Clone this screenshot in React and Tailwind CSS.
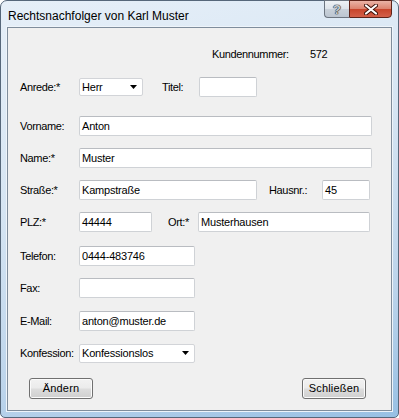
import React from 'react'

const font = "font-['Liberation_Sans',Arial,sans-serif]"

function Field({ value = '', w }) {
  return (
    <div className={`${w} h-[20px] shrink-0 bg-white border border-[#cfd2d6] border-t-[#b9bcc1] rounded-[2px] flex items-center pl-[2px] text-[11px] tracking-[-0.2px] text-black`}>
      {value}
    </div>
  )
}

function Combo({ value, w, h = 'h-[18px]' }) {
  return (
    <div className={`${w} ${h} shrink-0 bg-white border border-[#d2d4d8] rounded-[2px] flex items-center justify-between pl-[2px] pr-[5px] text-[11px] tracking-[-0.2px]`}>
      <span>{value}</span>
      <svg width="7" height="4" viewBox="0 0 7 4"><polygon points="0,0 7,0 3.5,4" fill="#000" /></svg>
    </div>
  )
}

function Label({ children, w = 'w-[59px]' }) {
  return <span className={`${w} shrink-0 whitespace-nowrap text-[11px] tracking-[-0.35px] text-black`}>{children}</span>
}

function Btn({ children }) {
  return (
    <button className="w-[64px] h-[21px] rounded-[3px] border border-[#707070] bg-[linear-gradient(#f2f2f2_0%,#ebebeb_48%,#dddddd_52%,#cfcfcf_100%)] text-[11px] tracking-[0.2px] text-black flex items-center justify-center shadow-[inset_0_0_0_1px_#fbfbfb]">
      {children}
    </button>
  )
}

export default function App() {
  return (
    <div className={`w-[399px] h-[418px] flex flex-col rounded-t-[7px] rounded-b-[5px] border border-[#56677a] bg-[linear-gradient(165deg,#e6eff8_0%,#d6e5f3_40%,#bcd4eb_75%,#98c0e4_100%)] ${font}`}>
      {/* Title bar */}
      <div className="h-[26px] flex items-start justify-between">
        <span className="pl-[7px] pt-[6px] text-[12px] text-black">Rechtsnachfolger von Karl Muster</span>
        <div className="flex mr-[6px] -mt-px">
          <div className="w-[25px] h-[18px] rounded-bl-[4px] border border-[#6c7580] border-r-0 bg-[linear-gradient(#eef2f6_0%,#dde3ea_50%,#c9d1da_51%,#bcc6d1_100%)] flex items-center justify-center">
            <span className="text-[13px] font-bold text-[#c9ced4] leading-none [text-shadow:0_0_1px_#1f2630,0_0_1px_#1f2630,0_0_1px_#1f2630]">?</span>
          </div>
          <div className="w-[43px] h-[18px] rounded-br-[4px] border border-[#5e2319] bg-[linear-gradient(#eab3a6_0%,#dc8470_48%,#c8452c_52%,#d3604a_100%)] flex items-center justify-center">
            <svg width="14" height="11" viewBox="0 0 14 11">
              <path d="M2 1.5 L12 9.5 M12 1.5 L2 9.5" stroke="#3b1008" strokeWidth="4" strokeLinecap="round" />
              <path d="M2 1.5 L12 9.5 M12 1.5 L2 9.5" stroke="#ffffff" strokeWidth="2.2" strokeLinecap="round" />
            </svg>
          </div>
        </div>
      </div>

      {/* Client area */}
      <div className="ml-[6px] w-[385px] h-[384px] border border-[#7f8d9c] bg-[#f0f0f0] flex flex-col shadow-[0_0_0_1px_#eef4fa]">
        <div className="mt-[16px] h-[20px] flex items-center pl-[204px] text-[11px] tracking-[-0.35px]">
          <span className="w-[98px]">Kundennummer:</span>
          <span>572</span>
        </div>

        <div className="mt-[13px] h-[20px] flex items-center pl-[12px]">
          <Label>Anrede:*</Label>
          <Combo value="Herr" w="w-[64px]" />
          <span className="ml-[19px] w-[37px] text-[11px] tracking-[-0.35px]">Titel:</span>
          <Field w="w-[58px]" />
        </div>

        <div className="mt-[19px] h-[20px] flex items-center pl-[12px]">
          <Label>Vorname:</Label>
          <Field value="Anton" w="w-[293px]" />
        </div>

        <div className="mt-[12px] h-[20px] flex items-center pl-[12px]">
          <Label>Name:*</Label>
          <Field value="Muster" w="w-[293px]" />
        </div>

        <div className="mt-[12px] h-[20px] flex items-center pl-[12px]">
          <Label>Straße:*</Label>
          <Field value="Kampstraße" w="w-[178px]" />
          <span className="ml-[12px] w-[53px] text-[11px] tracking-[-0.35px]">Hausnr.:</span>
          <Field value="45" w="w-[48px]" />
        </div>

        <div className="mt-[12px] h-[20px] flex items-center pl-[12px]">
          <Label>PLZ:*</Label>
          <Field value="44444" w="w-[73px]" />
          <span className="ml-[16px] w-[30px] text-[11px] tracking-[-0.35px]">Ort:*</span>
          <Field value="Musterhausen" w="w-[172px]" />
        </div>

        <div className="mt-[14px] h-[20px] flex items-center pl-[12px]">
          <Label>Telefon:</Label>
          <Field value="0444-483746" w="w-[116px]" />
        </div>

        <div className="mt-[12px] h-[20px] flex items-center pl-[12px]">
          <Label>Fax:</Label>
          <Field w="w-[116px]" />
        </div>

        <div className="mt-[13px] h-[20px] flex items-center pl-[12px]">
          <Label>E-Mail:</Label>
          <Field value="anton@muster.de" w="w-[116px]" />
        </div>

        <div className="mt-[12px] h-[20px] flex items-center pl-[12px]">
          <Label>Konfession:</Label>
          <Combo value="Konfessionslos" w="w-[116px]" h="h-[19px]" />
        </div>

        <div className="mt-[15px] flex justify-between pl-[21px] pr-[25px]">
          <Btn>Ändern</Btn>
          <Btn>Schließen</Btn>
        </div>
      </div>
    </div>
  )
}
